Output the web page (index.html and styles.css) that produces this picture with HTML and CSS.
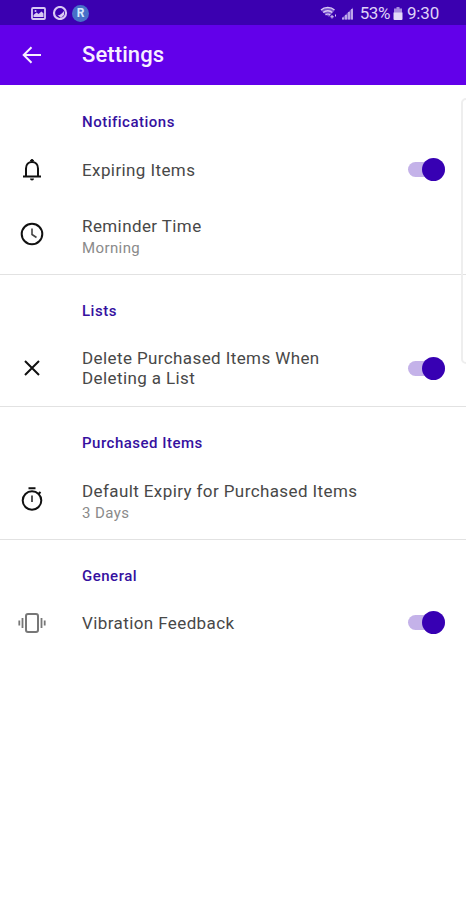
FILE: index.html
```html
<!DOCTYPE html>
<html lang="en">
<head>
<meta charset="utf-8">
<title>Settings</title>
<link rel="stylesheet" href="styles.css">
</head>
<body>
<div class="status">
  <div class="status-left">
    <svg width="15" height="13" viewBox="0 0 15 13"><rect x="1" y="1" width="13" height="11" rx="1" fill="none" stroke="#d9c9f4" stroke-width="1.8"/><path d="M2.5 10V8l3-2.500 2 1.500 3-2.500 2 2V10z" fill="#d9c9f4"/><circle cx="4.500" cy="4" r="1" fill="#d9c9f4"/></svg>
    <svg width="16" height="14" viewBox="0 0 16 14"><circle cx="8" cy="7" r="6" fill="none" stroke="#d9c9f4" stroke-width="2.200"/><path d="M4 8c2 2.500 5 1 8-3v4l-3 3z" fill="#d9c9f4"/></svg>
    <span class="badge">R</span>
  </div>
  <div class="status-right">
    <svg width="17" height="14" viewBox="0 0 17 14"><path d="M1 4.500C4.500 1 11 1 14.500 4.500L9 11z" fill="#7a55cf"/><path d="M1 4C4.500.7 11 .7 14.500 4M3.200 6.500c2.500-2.300 6.800-2.300 9 0M5.500 9c1.300-1.200 3.500-1.200 4.700 0" fill="none" stroke="#d9c9f4" stroke-width="1.400"/><path d="M12 9v3.500M10.300 10.800h3.500M15.500 8.500v2" stroke="#d9c9f4"/></svg>
    <svg class="signal" width="13" height="13" viewBox="0 0 13 13"><path d="M1 12.500V11L12 .5v12z" fill="#7f5cd0"/><path d="M2 12.500v-2M5 12.500V8M8 12.500V5M11 12.500V2" stroke="#cdb9f0" stroke-width="1.600"/></svg>
    <span class="percent">53%</span>
    <svg class="battery" width="10" height="13" viewBox="0 0 10 13"><path d="M3.500 0h3v1.500H9V6H1V1.500h2.500z" fill="#a78be0"/><path d="M.5 5.500h9V12a1 1 0 0 1-1 1h-7a1 1 0 0 1-1-1z" fill="#e4daf8"/></svg>
    <span class="time">9:30</span>
  </div>
</div>
<header class="appbar">
  <svg class="icon" viewBox="0 0 28 28" fill="none" stroke="#f7f0ff" stroke-width="2"><path d="M23 14H6M13.500 6.200L5.700 14l7.800 7.800"/></svg>
  <h1>Settings</h1>
</header>
<main>
  <section>
    <h2 class="w-notifications">Notifications</h2>
    <div class="row single">
      <svg class="icon" viewBox="0 0 28 28" fill="none" stroke="#111" stroke-width="2"><path d="M8 20v-7.500c0-4 2.500-6.500 6-6.500s6 2.500 6 6.500V20M5 20.500h18"/><path d="M12.500 5a1.500 1.500 0 0 1 3 0z" fill="#111" stroke-width="1"/><path d="M12 22.500h4a2 2 0 0 1-4 0z" fill="#111" stroke="none"/></svg>
      <div class="label"><p class="title">Expiring Items</p></div>
      <span class="switch"></span>
    </div>
    <div class="row double">
      <svg class="icon" viewBox="0 0 28 28" fill="none" stroke="#111" stroke-width="2"><circle cx="14" cy="14" r="10.300"/><path d="M14 8.500v6l4.500 3" stroke="#444" stroke-width="1.600"/></svg>
      <div class="label"><p class="title">Reminder Time</p><p class="sub">Morning</p></div>
    </div>
  </section>
  <section>
    <h2>Lists</h2>
    <div class="row wrap">
      <svg class="icon" viewBox="0 0 28 28" fill="none" stroke="#111" stroke-width="2"><path d="M7 7l14 14M21 7L7 21"/></svg>
      <div class="label"><p class="title">Delete Purchased Items When<br>Deleting a List</p></div>
      <span class="switch"></span>
    </div>
  </section>
  <section>
    <h2>Purchased Items</h2>
    <div class="row double">
      <svg class="icon" viewBox="0 0 28 28" fill="none" stroke="#111" stroke-width="2"><circle cx="14" cy="15.500" r="9.300"/><path d="M10.500 3.200h7M20.500 9l2-2"/><path d="M14 10.500V17" stroke="#555"/></svg>
      <div class="label"><p class="title">Default Expiry for Purchased Items</p><p class="sub">3 Days</p></div>
    </div>
  </section>
  <section>
    <h2>General</h2>
    <div class="row single">
      <svg class="icon" viewBox="0 0 28 28" fill="none" stroke="#777" stroke-width="2"><rect x="8" y="5" width="12" height="18" rx="2"/><path d="M4.500 9v10M23.500 9v10" stroke-width="1.800"/><path d="M1.300 11.500v5M26.700 11.500v5" stroke-width="1.800"/></svg>
      <div class="label"><p class="title">Vibration Feedback</p></div>
      <span class="switch"></span>
    </div>
  </section>
</main>
<div class="edge"></div>
</body>
</html>
```
FILE: styles.css
```css
* { box-sizing: border-box; }
body { margin: 0; position: relative; height: 900px; overflow: hidden; background: #fff; font-family: Roboto, sans-serif; }
h1, h2, p { margin: 0; }
svg { display: block; flex: none; }
.status { display: flex; justify-content: space-between; align-items: center; height: 25px; padding: 1px 27px 0 31px; background: #3b00b0; color: #dfd2f7; }
.status-left, .status-right { display: flex; align-items: center; }
.status-left { gap: 6px; }
.badge { width: 17px; height: 17px; margin-left: -2px; border-radius: 50%; background: #4770c8; color: #d7ecff; font-size: 12px; font-weight: 700; line-height: 17px; text-align: center; }
.status-right { font-size: 17px; line-height: 24px; }
.signal { margin-left: 4px; }
.percent { margin-left: 6px; letter-spacing: -0.4px; }
.battery { margin: 0 4px 0 3px; }
.time { letter-spacing: -0.2px; }
.appbar { display: flex; align-items: center; height: 60px; padding-left: 18px; background: #6200ea; }
.appbar h1 { margin-left: 36px; color: #f7f0ff; font-size: 22px; font-weight: 500; line-height: 28px; letter-spacing: 0.1px; }
.icon { width: 28px; height: 28px; flex: none; }
section { border-bottom: 1px solid #e2e2e2; }
section:last-child { border-bottom: 0; }
h2 { height: 55px; padding: 25px 0 0 82px; color: #3510a0; font-size: 15px; font-weight: 500; line-height: 22px; letter-spacing: 0.5px; }
section:first-child h2 { height: 57px; padding-top: 26px; }
.row { display: flex; align-items: center; padding: 0 21px 0 18px; }
.single { height: 55px; }
.double { height: 77px; padding-bottom: 3px; }
.double .label { padding-top: 5px; }
.wrap { height: 76px; }
.label { flex: 1; margin-left: 36px; white-space: nowrap; }
.title { color: #484848; font-size: 17px; line-height: 22px; letter-spacing: 0.4px; }
.wrap .title { line-height: 20px; }
.sub { color: #8a8a8a; font-size: 15px; line-height: 22px; letter-spacing: 0.4px; }
.switch { display: flex; justify-content: flex-end; align-items: center; width: 37px; height: 15px; border-radius: 8px; background: #c4b2e9; }
.switch::after { content: ""; width: 23px; height: 23px; flex: none; border-radius: 50%; background: #3700b3; }
.edge { position: absolute; left: 461px; top: 98px; width: 20px; height: 266px; border: 2px solid #eee; border-radius: 5px; }
```
